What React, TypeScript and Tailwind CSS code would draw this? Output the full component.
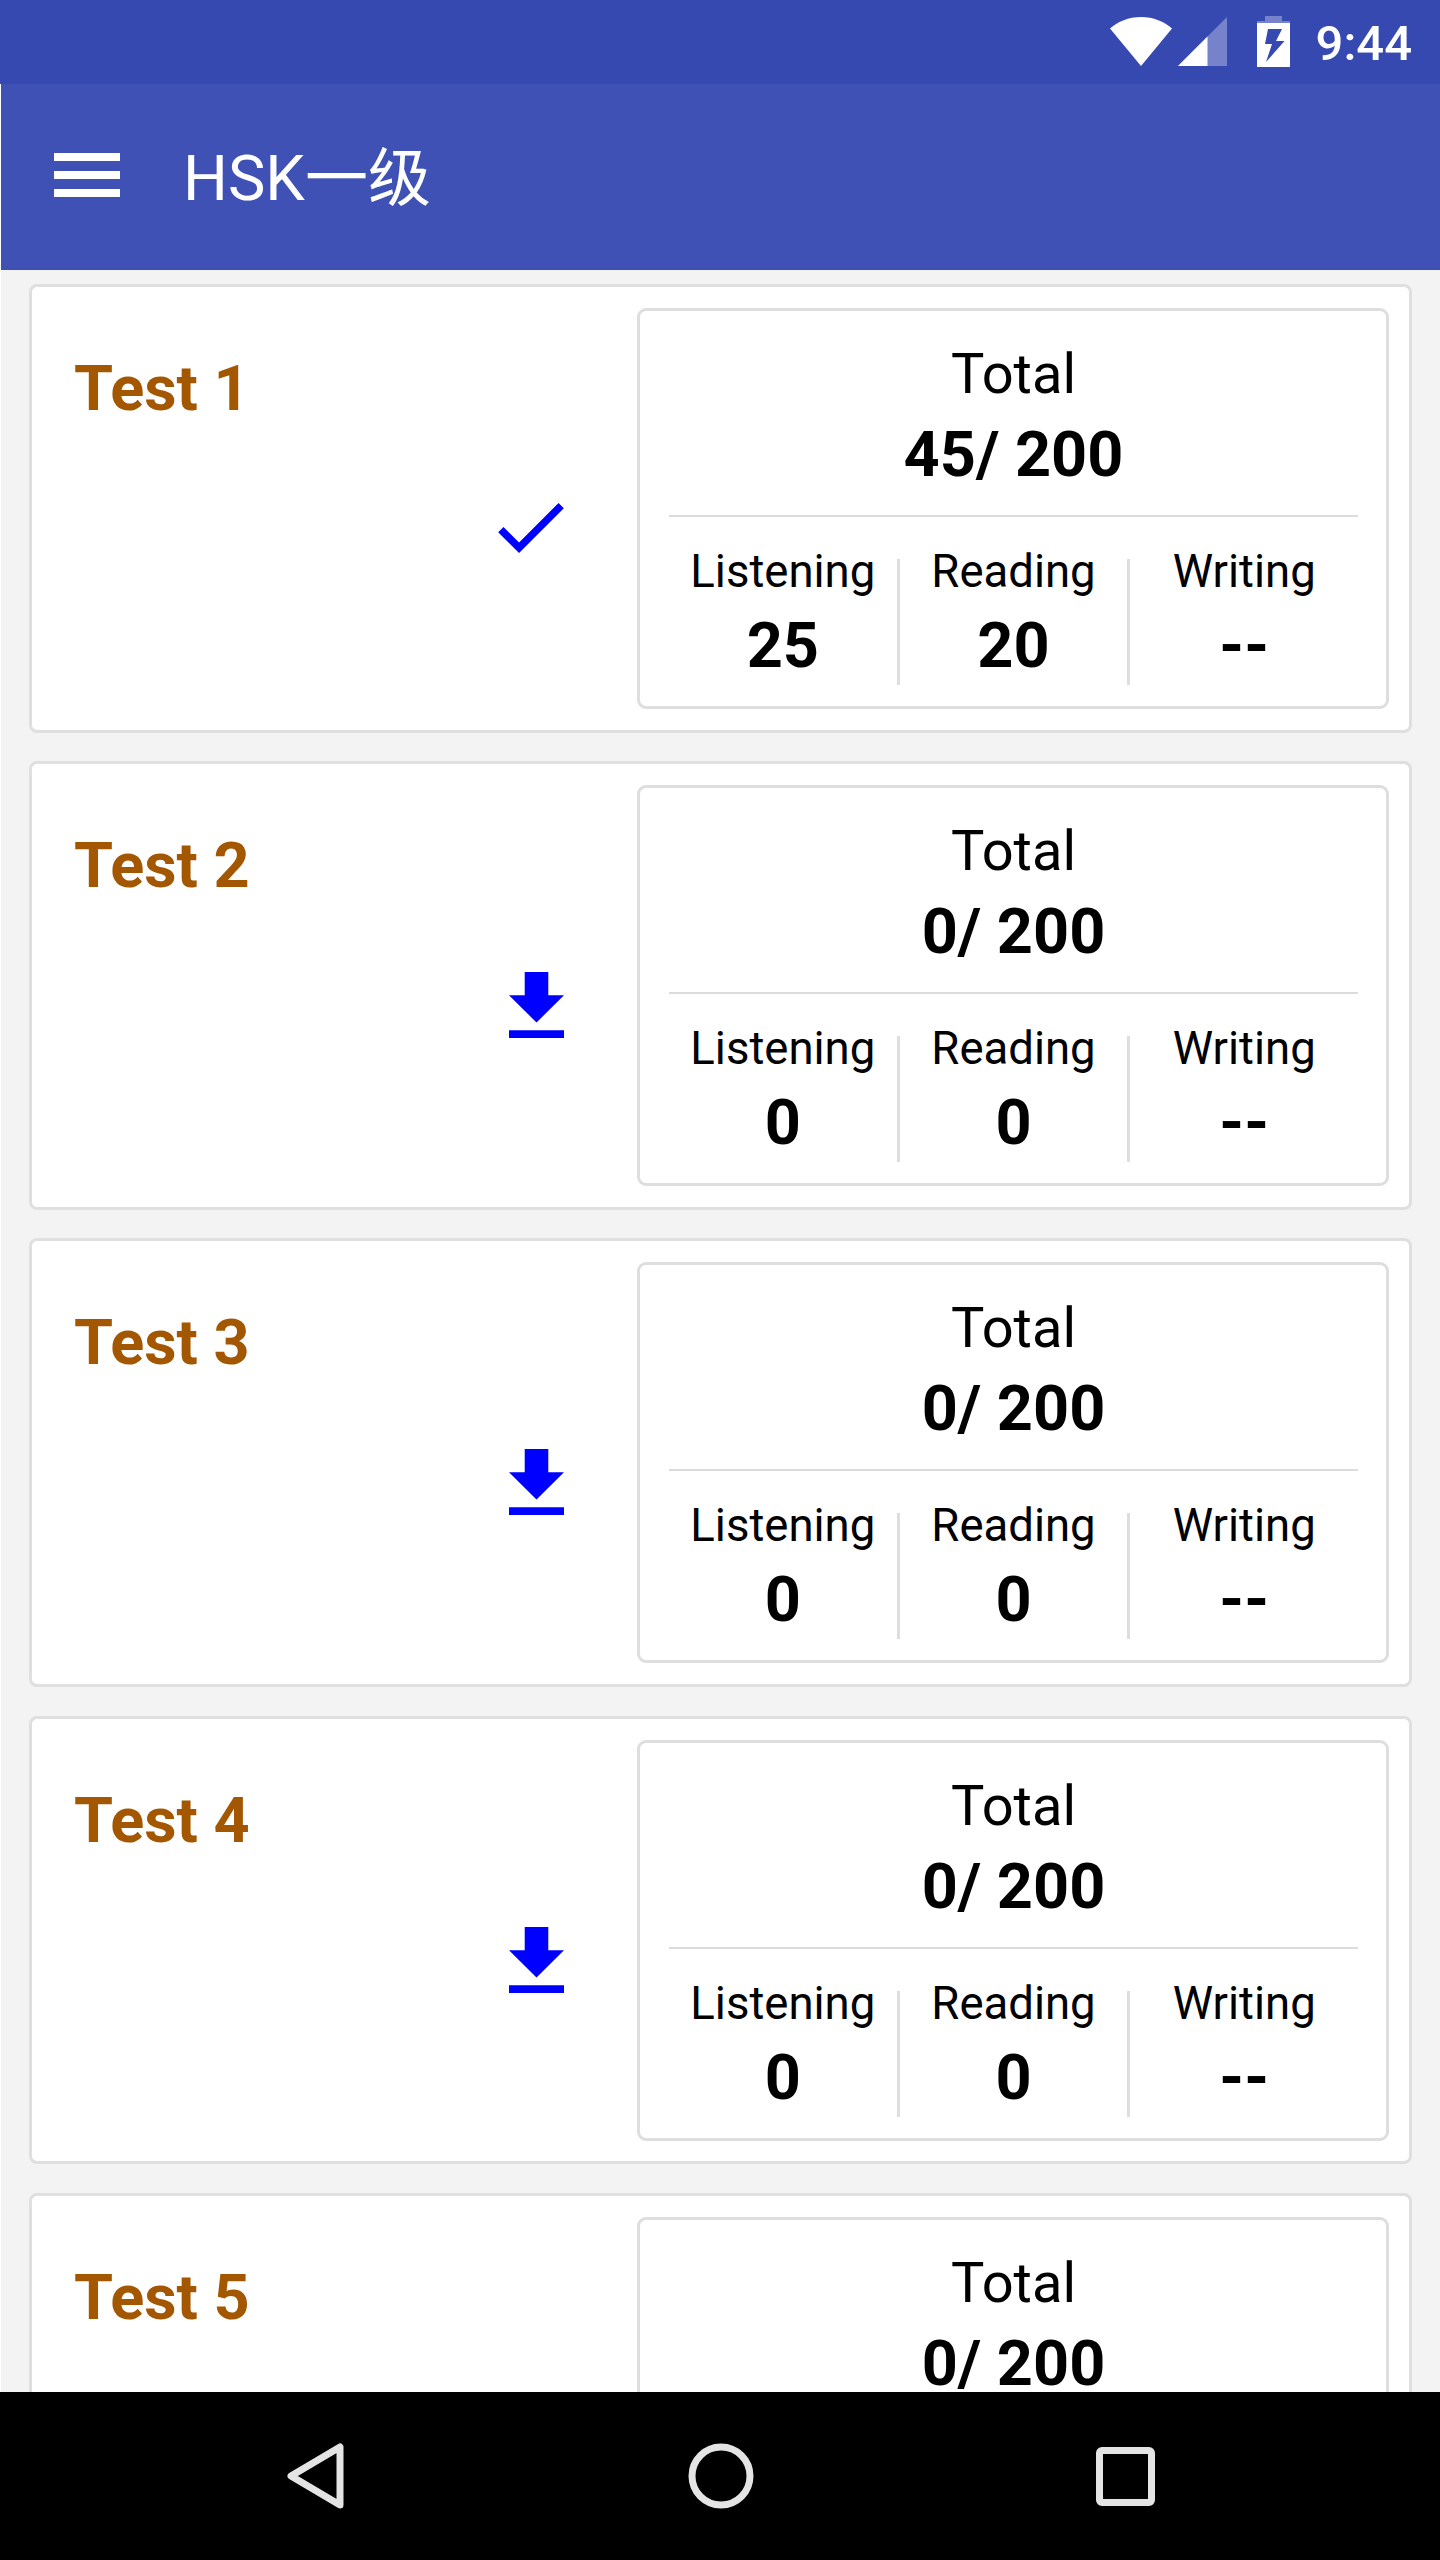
import React from "react";

interface Test {
  name: string;
  total: string;
  listening: string;
  reading: string;
  writing: string;
  done: boolean;
}

const tests: Test[] = [
  { name: "Test 1", total: "45", listening: "25", reading: "20", writing: "--", done: true },
  { name: "Test 2", total: "0", listening: "0", reading: "0", writing: "--", done: false },
  { name: "Test 3", total: "0", listening: "0", reading: "0", writing: "--", done: false },
  { name: "Test 4", total: "0", listening: "0", reading: "0", writing: "--", done: false },
  { name: "Test 5", total: "0", listening: "0", reading: "0", writing: "--", done: false },
];

const CheckIcon = () => (
  <svg className="h-[50px] w-[66px]" viewBox="3.41 5.59 17.59 13.41" fill="#0000ff">
    <path d="M9 16.17L4.83 12l-1.42 1.41L9 19 21 7l-1.41-1.41z" />
  </svg>
);

const DownloadIcon = () => (
  <svg className="mt-[-8px] h-[66px] w-[55px]" viewBox="5 3 14 17" preserveAspectRatio="none" fill="#0000ff">
    <path d="M19 9h-4V3H9v6H5l7 7 7-7zM5 18v2h14v-2H5z" />
  </svg>
);

const StatusBar = () => (
  <div className="flex h-[84px] shrink-0 items-start justify-end bg-[#3549b1] pr-[28px]">
    <svg className="mt-[17px] h-[49px] w-[62px]" viewBox="0 0 62 49" fill="#fff">
      <path d="M31 49L0 11.500C8 4.500 18.500 0 31 0S54 4.500 62 11.500z" />
    </svg>
    <svg className="mt-[17px] ml-[6px] h-[49px] w-[49px]" viewBox="0 0 49 49" fill="#fff">
      <path d="M0 49L49 0V49z" opacity="0.32" />
      <path d="M0 49L29.500 19.500V49z" />
    </svg>
    <svg className="mt-[16px] ml-[30px] h-[51px] w-[33px]" viewBox="0 0 33 51" fill="#fff">
      <path d="M8 0h17v5h8v2H0V5h8z" opacity="0.32" />
      <path fillRule="evenodd" d="M0 7h33v44H0zM11 13L8 28h7l-6 18L27.500 25H19l6-12z" />
    </svg>
    <span className="ml-[26px] pt-[14px] text-[49px] leading-[60px] font-medium text-white">9:44</span>
  </div>
);

const Header = () => (
  <header className="ml-px flex h-[186px] shrink-0 items-center bg-[#3f51b5] pl-[53px]">
    <div className="mt-[-4px] flex w-[66px] flex-col gap-[10px]">
      <div className="h-[8px] bg-white"></div>
      <div className="h-[8px] bg-white"></div>
      <div className="h-[8px] bg-white"></div>
    </div>
    <h1 className="mt-[3px] ml-[63px] text-[63px] leading-[80px] text-white">HSK一级</h1>
  </header>
);

const Score = ({ label, value }: { label: string; value: string }) => (
  <div className="flex flex-1 flex-col items-center pt-[28px]">
    <span className="text-[45.5px] leading-[54px]">{label}</span>
    <span className="text-[63px] leading-[94px] font-bold">{value}</span>
  </div>
);

const Separator = () => <div className="mt-[42px] h-[126px] w-[3px] bg-[#dedede]"></div>;

const TestCard = ({ test }: { test: Test }) => (
  <div className="flex h-[448.5px] shrink-0 items-start rounded-[8px] border-[3px] border-[#dfdfdf] bg-white pt-[21px] pr-[20px]">
    <div className="flex flex-1 flex-col pl-[42px]">
      <h2 className="mt-[42px] text-[63px] leading-[78px] font-bold text-[#a35700]">{test.name}</h2>
      <div className="mt-[75px] flex justify-end pr-[73px]">
        {test.done ? <CheckIcon /> : <DownloadIcon />}
      </div>
    </div>
    <div className="h-[401px] w-[752px] rounded-[9px] border-[3px] border-[#dedede] pt-[30px] pr-[28px] pl-[29px] text-black">
      <div className="flex flex-col items-center">
        <span className="text-[56px] leading-[66px]">Total</span>
        <span className="mt-[11px] text-[63px] leading-[74px] font-bold">{test.total}/ 200</span>
      </div>
      <div className="mt-[23px] h-[2px] bg-[#dcdcdc]"></div>
      <div className="flex items-start">
        <Score label="Listening" value={test.listening} />
        <Separator />
        <Score label="Reading" value={test.reading} />
        <Separator />
        <Score label="Writing" value={test.writing} />
      </div>
    </div>
  </div>
);

const NavBar = () => (
  <nav className="flex h-[168px] shrink-0 items-center bg-black pl-[287px]">
    <svg className="h-[66px] w-[57px]" viewBox="0 0 57 66" fill="none" stroke="#e4e4e4" strokeWidth="7" strokeLinejoin="round">
      <path d="M4 33L53 4V62z" />
    </svg>
    <svg className="ml-[344px] h-[66px] w-[66px]" viewBox="0 0 66 66" fill="none" stroke="#e4e4e4" strokeWidth="7">
      <circle cx="33" cy="33" r="29" />
    </svg>
    <div className="ml-[342px] h-[59px] w-[59px] rounded-[6px] border-[7px] border-[#e4e4e4]"></div>
  </nav>
);

const App = () => {
  return (
    <div className="flex h-[2560px] w-[1440px] flex-col overflow-hidden bg-white font-['Roboto','Noto_Sans_CJK_SC',sans-serif]">
      <StatusBar />
      <Header />
      <main className="ml-px flex min-h-0 flex-1 flex-col gap-[28.7px] overflow-hidden bg-[#f3f3f3] pt-[14px] pr-[28px] pl-[28px]">
        {tests.map((test) => (
          <TestCard key={test.name} test={test} />
        ))}
      </main>
      <NavBar />
    </div>
  );
};

export default App;
